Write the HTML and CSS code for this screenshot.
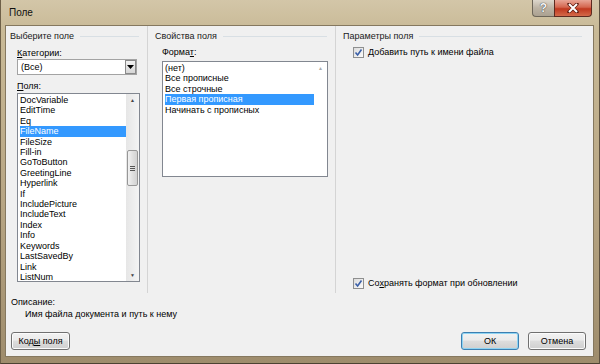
FILE: index.html
```html
<!DOCTYPE html>
<html>
<head>
<title>Поле</title>
<link rel="stylesheet" href="styles.css">
</head>
<body>
<div class="window">
    <div class="titlebar">
        <span class="title">Поле</span>
        <div class="caption">
            <div class="cap-help">?</div>
            <div class="cap-close">
                <svg width="14" height="10" viewBox="0 0 14 10"><path d="M3 1 L11 9 M11 1 L3 9" stroke="#5a1a10" stroke-width="3.4" stroke-linecap="round"/><path d="M3 1 L11 9 M11 1 L3 9" stroke="#fff" stroke-width="2"/></svg>
            </div>
        </div>
    </div>
    <div class="client">
        <div class="panes">
            <div class="pane pane-left">
                <div class="group-head"><span>Выберите поле</span><i></i></div>
                <div class="label lbl-cat"><u>К</u>атегории:</div>
                <div class="combo">
                    <span class="combo-text">(Все)</span>
                    <span class="combo-btn"><svg width="7" height="4" viewBox="0 0 7 4"><path d="M0 0 H7 L3.5 4 Z" fill="#000"/></svg></span>
                </div>
                <div class="label lbl-fields"><u>П</u>оля:</div>
                <div class="listbox list-fields">
                    <div class="items">
                        <div>DocVariable</div>
                        <div>EditTime</div>
                        <div>Eq</div>
                        <div class="sel">FileName</div>
                        <div>FileSize</div>
                        <div>Fill-in</div>
                        <div>GoToButton</div>
                        <div>GreetingLine</div>
                        <div>Hyperlink</div>
                        <div>If</div>
                        <div>IncludePicture</div>
                        <div>IncludeText</div>
                        <div>Index</div>
                        <div>Info</div>
                        <div>Keywords</div>
                        <div>LastSavedBy</div>
                        <div>Link</div>
                        <div>ListNum</div>
                    </div>
                    <div class="vscroll">
                        <span class="arr">&#9650;</span>
                        <span class="thumb"><i></i><i></i><i></i></span>
                        <span class="arr arr-down">&#9660;</span>
                    </div>
                </div>
            </div>
            <div class="pane pane-mid">
                <div class="group-head"><span>Свойства поля</span><i></i></div>
                <div class="label lbl-format">Форма<u>т</u>:</div>
                <div class="listbox list-format">
                    <div class="items">
                        <div>(нет)</div>
                        <div>Все прописные</div>
                        <div>Все строчные</div>
                        <div class="sel">Первая прописная</div>
                        <div>Начинать с прописных</div>
                    </div>
                    <div class="vscroll off">
                        <span class="arr">&#9650;</span>
                    </div>
                </div>
            </div>
            <div class="pane pane-right">
                <div class="group-head"><span>Параметры поля</span><i></i></div>
                <label class="check chk-path"><span class="box"><svg width="9" height="9" viewBox="0 0 9 9"><path d="M1.5 4.5 L3.6 7 L7.5 1.5" stroke="#3a5fa8" stroke-width="1.6" fill="none"/></svg></span><span><u>Д</u>обавить путь к имени файла</span></label>
                <label class="check chk-keep"><span class="box"><svg width="9" height="9" viewBox="0 0 9 9"><path d="M1.5 4.5 L3.6 7 L7.5 1.5" stroke="#3a5fa8" stroke-width="1.6" fill="none"/></svg></span><span>Со<u>х</u>ранять формат при обновлении</span></label>
            </div>
        </div>
        <div class="desc">
            <div class="desc-label">Описание:</div>
            <div class="desc-text">Имя файла документа и путь к нему</div>
        </div>
        <div class="buttons">
            <button class="btn btn-codes">Код<u>ы</u> поля</button>
            <span class="spacer"></span>
            <button class="btn btn-ok">ОК</button>
            <button class="btn btn-cancel">Отмена</button>
        </div>
    </div>
</div>
</body>
</html>
```

FILE: styles.css
```css
html, body {
    margin: 0;
    padding: 0;
    width: 600px;
    height: 364px;
    overflow: hidden;
}
body {
    font-family: "Liberation Sans", Arial, sans-serif;
    font-size: 9px;
    color: #000;
}
u {
    text-decoration: underline;
    text-underline-offset: 1px;
}
.window {
    width: 600px;
    height: 364px;
    box-sizing: border-box;
    padding: 0 5px 6px 4px;
    display: flex;
    flex-direction: column;
    background: linear-gradient(to bottom, #d3c6a8 0px, #c9ba97 30px, #b8a684 200px, #9e8c6c 364px);
    border-left: 1px solid #6e6048;
    border-right: 1px solid #5c5040;
    border-bottom: 1px solid #4c4232;
}
.titlebar {
    height: 25px;
    flex: none;
    display: flex;
    align-items: flex-start;
    position: relative;
}
.title {
    font-size: 10px;
    margin: 7px 0 0 4px;
    color: #101010;
}
.caption {
    position: absolute;
    top: 0;
    right: 2px;
    display: flex;
}
.cap-help {
    width: 21px;
    height: 16px;
    border: 1px solid #6d6659;
    border-top: none;
    border-right: none;
    border-radius: 0 0 0 4px;
    background: linear-gradient(to bottom, #ddd7cc, #bcb3a4 50%, #aba191);
    color: #f4f4f4;
    font-size: 12px;
    font-weight: bold;
    text-align: center;
    line-height: 16px;
    text-shadow: 0 0 1px #444, 0 0 1px #444;
}
.cap-close {
    width: 36px;
    height: 16px;
    border: 1px solid #5d2a20;
    border-top: none;
    border-radius: 0 0 4px 0;
    background: linear-gradient(to bottom, #e8a596, #d4664f 45%, #c0381f 55%, #d46a4a);
    display: flex;
    align-items: center;
    justify-content: center;
}
.client {
    flex: 1;
    background: #f0f0f0;
    border: 1px solid #85785f;
    display: flex;
    flex-direction: column;
}
.panes {
    height: 267px;
    display: flex;
    flex: none;
}
.pane {
    box-sizing: border-box;
    padding-top: 3px;
    display: flex;
    flex-direction: column;
}
.pane-left {
    width: 142px;
    padding-left: 4px;
    border-right: 1px solid #d4d4d4;
}
.pane-mid {
    width: 188px;
    padding-left: 7px;
    border-right: 1px solid #d4d4d4;
}
.pane-right {
    flex: 1;
    padding-left: 7px;
    padding-right: 3px;
    padding-bottom: 4px;
}
.group-head {
    display: flex;
    align-items: center;
    line-height: 12px;
    color: #1a1a1a;
    margin-top: 1px;
}
.group-head i {
    flex: 1;
    height: 1px;
    background: #d8dfe4;
    margin: 0 8px 0 6px;
}
.label {
    line-height: 12px;
    margin-left: 7px;
}
.lbl-cat { margin-top: 5px; }
.lbl-fields { margin-top: 5px; }
.lbl-format { margin-left: 7px; margin-top: 4px; }
.combo {
    margin-left: 7px;
    width: 120px;
    height: 16px;
    box-sizing: border-box;
    border: 1px solid #a3a3a3;
    background: #fff;
    display: flex;
    align-items: center;
}
.combo-text {
    flex: 1;
    padding-left: 3px;
}
.combo-btn {
    width: 11px;
    height: 14px;
    box-sizing: border-box;
    border: 1px solid #8a8a8a;
    background: linear-gradient(to bottom, #f2f2f2, #d6d6d6);
    display: flex;
    align-items: center;
    justify-content: center;
}
.listbox {
    box-sizing: border-box;
    border: 1px solid #828790;
    background: #fff;
    display: flex;
}
.list-fields {
    margin: 1px 0 0 7px;
    width: 123px;
    height: 189px;
}
.list-format {
    margin: 3px 0 0 7px;
    width: 166px;
    height: 116px;
}
.items {
    flex: 1;
    padding: 1px 0 0 2px;
    line-height: 10.4px;
    overflow: hidden;
}
.items div {
    white-space: nowrap;
}
.items .sel {
    background: #3399ff;
    color: #fff;
}
.vscroll {
    width: 13px;
    flex: none;
    background: linear-gradient(to right, #e6e6e6, #f4f4f4);
    display: flex;
    flex-direction: column;
    align-items: center;
}
.vscroll.off {
    background: #fff;
}
.arr {
    font-size: 5px;
    line-height: 12px;
    color: #444;
}
.vscroll.off .arr {
    color: #aaa;
}
.arr-down {
    margin-top: auto;
}
.thumb {
    margin-top: 44px;
    width: 11px;
    height: 36px;
    box-sizing: border-box;
    border: 1px solid #979797;
    border-radius: 2px;
    background: linear-gradient(to right, #f2f2f2, #e0e0e0 50%, #d2d2d2);
    display: flex;
    flex-direction: column;
    align-items: center;
    justify-content: center;
    gap: 1px;
}
.thumb i {
    width: 5px;
    height: 1px;
    background: #555;
}
.check {
    display: flex;
    align-items: center;
    line-height: 12px;
    margin-left: 10px;
}
.chk-path { margin-top: 4px; }
.chk-keep { margin-top: auto; }
.box {
    width: 11px;
    height: 11px;
    box-sizing: border-box;
    border: 1px solid #8e8f8f;
    background: linear-gradient(135deg, #dcdcdc, #fbfbfb);
    margin-right: 4px;
    display: flex;
    align-items: center;
    justify-content: center;
}
.desc {
    padding: 3px 0 0 5px;
    line-height: 12px;
    flex: none;
}
.desc-text {
    padding-left: 14px;
}
.buttons {
    display: flex;
    align-items: flex-start;
    padding: 12px 7px 0 5px;
}
.spacer { flex: 1; }
.btn {
    font-family: inherit;
    font-size: 9px;
    height: 18px;
    width: 58px;
    padding: 0;
    border: 1px solid #707070;
    border-radius: 3px;
    background: linear-gradient(to bottom, #f2f2f2 0%, #ebebeb 45%, #dddddd 50%, #cfcfcf 100%);
    color: #000;
    box-shadow: inset 0 0 0 1px #fbfbfb;
}
.btn-codes { width: 59px; }
.btn-ok {
    border-color: #3c7fb1;
    box-shadow: inset 0 0 0 1px #8ed4f3;
    margin-right: 9px;
}
```
